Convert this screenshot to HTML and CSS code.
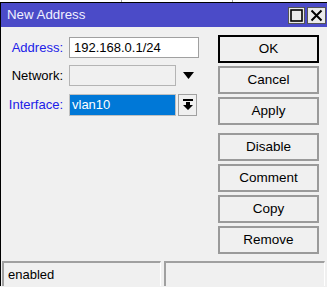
FILE: index.html
```html
<!DOCTYPE html>
<html>
<head>
<meta charset="utf-8">
<link rel="stylesheet" href="styles.css">
</head>
<body>
<div class="topstrip"><span class="tl tl1"></span><span class="tl tl2"></span></div>
<div class="window">
  <div class="titlebar">
    <span class="title">New Address</span>
    <div class="tbtns">
      <span class="tbtn"><svg width="15" height="15" viewBox="0 0 15 15"><rect x="2" y="2" width="11" height="11" fill="none" stroke="#000" stroke-width="1.6"/></svg></span>
      <span class="tbtn"><svg width="15" height="15" viewBox="0 0 15 15"><path d="M2.5 2.5 L12.5 12.5 M12.5 2.5 L2.5 12.5" stroke="#000" stroke-width="2"/></svg></span>
    </div>
  </div>
  <div class="content">
    <div class="form">
      <div class="row">
        <label class="lbl blue">Address:</label>
        <div class="input wide">192.168.0.1/24</div>
      </div>
      <div class="row">
        <label class="lbl">Network:</label>
        <div class="input narrow disabled"></div>
        <span class="tri"><svg width="11" height="7" viewBox="0 0 11 7"><path d="M0 0 H11 L5.5 7 Z" fill="#000"/></svg></span>
      </div>
      <div class="row">
        <label class="lbl blue">Interface:</label>
        <div class="input narrow selected">vlan10</div>
        <span class="ddbtn"><svg width="10" height="11" viewBox="0 0 10 11"><rect x="0" y="0" width="10" height="2" fill="#000"/><path d="M3 3 H7 V6 H10 L5 11 L0 6 H3 Z" fill="#000"/></svg></span>
      </div>
    </div>
    <div class="buttons">
      <div class="btn default">OK</div>
      <div class="btn">Cancel</div>
      <div class="btn">Apply</div>
      <div class="btn sep">Disable</div>
      <div class="btn">Comment</div>
      <div class="btn">Copy</div>
      <div class="btn">Remove</div>
    </div>
  </div>
  <div class="status">
    <div class="panel p1">enabled</div>
    <div class="panel p2"></div>
  </div>
</div>
</body>
</html>
```
FILE: styles.css
```css
html, body {
  margin: 0;
  padding: 0;
  background: #f0f0f0;
  width: 327px;
  height: 287px;
  overflow: hidden;
  font-family: "Liberation Sans", Arial, sans-serif;
  font-size: 13px;
  color: #000;
}
.topstrip {
  height: 2px;
  background: #fff;
  position: relative;
}
.tl {
  position: absolute;
  top: 0;
  width: 1px;
  height: 2px;
  background: #a0a0a0;
}
.tl1 { left: 121px; }
.tl2 { left: 232px; }
.window {
  border-top: 1px solid #000;
  border-left: 1px solid #000;
  height: 284px;
  box-sizing: border-box;
  display: flex;
  flex-direction: column;
}
.titlebar {
  height: 24px;
  background: #4b4bc8;
  display: flex;
  align-items: center;
  justify-content: space-between;
}
.title {
  color: #f0f0ff;
  padding-left: 6px;
  font-size: 13.3px;
}
.tbtns {
  display: flex;
  gap: 2px;
  margin-right: 1px;
  margin-top: 2px;
}
.tbtn {
  width: 17px;
  height: 17px;
  box-sizing: border-box;
  background: #eaeaea;
  border: 1px solid #555;
  display: flex;
  align-items: center;
  justify-content: center;
}
.tbtn + .tbtn { width: 19px; }
.content {
  display: flex;
  height: 235px;
}
.form {
  width: 217px;
  padding-top: 10px;
  display: flex;
  flex-direction: column;
  gap: 7px;
}
.row {
  display: flex;
  align-items: center;
  height: 21px;
}
.row + .row + .row { margin-top: 1px; height: 22px; }
.lbl {
  width: 62px;
  text-align: right;
  margin-right: 6px;
  color: #000;
}
.lbl.blue { color: #2020e8; }
.input {
  height: 100%;
  box-sizing: border-box;
  border: 1px solid #a0a0a0;
  background: #fff;
  padding-left: 4px;
  line-height: 19px;
}
.wide { width: 130px; }
.narrow { width: 107px; }
.disabled { background: #f0f0f0; border-color: #b4b4b4; }
.selected {
  background: #0078d7;
  color: #fff;
  padding-left: 2px;
  border-color: #c0c0c0;
}
.tri {
  margin-left: 7px;
  display: flex;
}
.ddbtn {
  margin-left: 2px;
  width: 19px;
  height: 22px;
  box-sizing: border-box;
  border: 1px solid #a0a0a0;
  background: #f0f0f0;
  display: flex;
  align-items: center;
  justify-content: center;
}
.buttons {
  padding-top: 8px;
  display: flex;
  flex-direction: column;
  gap: 3px;
}
.btn {
  width: 101px;
  height: 28px;
  box-sizing: border-box;
  border: 2px solid #9a9a9a;
  background: #f0f0f0;
  display: flex;
  align-items: center;
  justify-content: center;
  font-size: 13.5px;
}
.btn.default { border-color: #000; }
.btn.sep { margin-top: 5px; }
.status {
  display: flex;
  gap: 3px;
  padding-left: 1px;
  height: 25px;
}
.panel {
  box-sizing: border-box;
  border-top: 2px solid #a0a0a0;
  border-left: 2px solid #a0a0a0;
  border-right: 1px solid #fff;
  height: 25px;
  display: flex;
  align-items: center;
  padding-left: 4px;
}
.p1 { width: 159px; }
.p2 { width: 161px; }
```
